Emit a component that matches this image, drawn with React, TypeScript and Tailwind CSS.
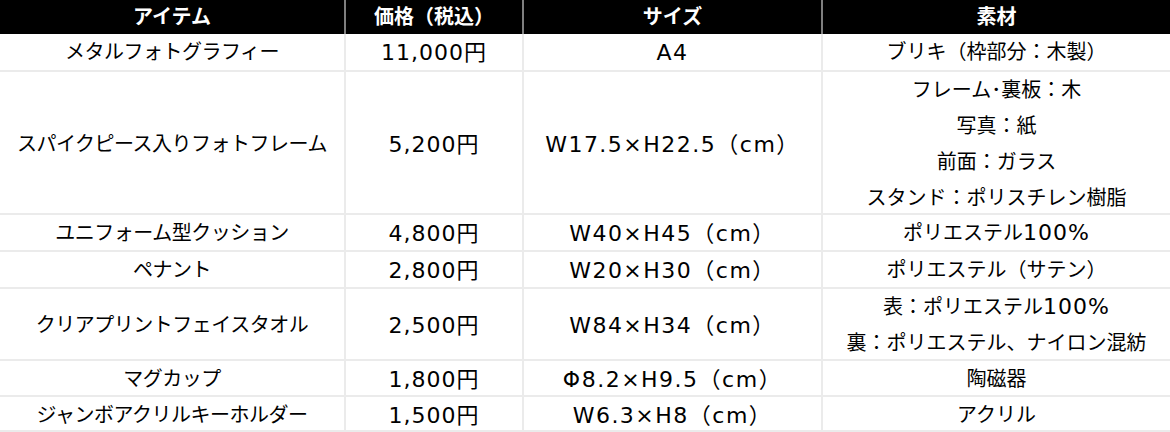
import React from "react";

const font = {
  fontFamily: '"DejaVu Sans", "Noto Sans CJK JP", sans-serif',
};

type Row = {
  item: string;
  price: string;
  size: string;
  material: string[];
  h: string;
};

const rows: Row[] = [
  { item: "メタルフォトグラフィー", price: "11,000円", size: "A4", material: ["ブリキ（枠部分：木製）"], h: "h-[38px]" },
  {
    item: "スパイクピース入りフォトフレーム",
    price: "5,200円",
    size: "W17.5×H22.5（cm）",
    material: ["フレーム･裏板：木", "写真：紙", "前面：ガラス", "スタンド：ポリスチレン樹脂"],
    h: "h-[143px]",
  },
  { item: "ユニフォーム型クッション", price: "4,800円", size: "W40×H45（cm）", material: ["ポリエステル100%"], h: "h-[37px]" },
  { item: "ペナント", price: "2,800円", size: "W20×H30（cm）", material: ["ポリエステル（サテン）"], h: "h-[37px]" },
  {
    item: "クリアプリントフェイスタオル",
    price: "2,500円",
    size: "W84×H34（cm）",
    material: ["表：ポリエステル100%", "裏：ポリエステル、ナイロン混紡"],
    h: "h-[72px]",
  },
  { item: "マグカップ", price: "1,800円", size: "Φ8.2×H9.5（cm）", material: ["陶磁器"], h: "h-[36px]" },
  { item: "ジャンボアクリルキーホルダー", price: "1,500円", size: "W6.3×H8（cm）", material: ["アクリル"], h: "h-[35px]" },
];

const cols = "grid grid-cols-[346px_178px_299px_347px]";

// latin runs are set a bit larger so they read like the original's wide digits
function Mixed({ text }: { text: string }) {
  const parts = text.split(/([0-9%]+)/);
  return (
    <>
      {parts.map((p, i) =>
        /^[0-9%]+$/.test(p) ? (
          <span key={i} className="text-[22px] tracking-[1px]">{p}</span>
        ) : (
          <span key={i}>{p}</span>
        )
      )}
    </>
  );
}

export default function App() {
  return (
    <div className="w-[1170px] h-[432px] overflow-hidden bg-white text-black" style={font}>
      <div className={`${cols} h-[34px] bg-black text-white font-bold text-[20px]`}>
        <div className="flex items-center justify-center border-r-2 border-[#7f7f7f]">アイテム</div>
        <div className="flex items-center justify-center border-r-2 border-[#7f7f7f]">価格（税込）</div>
        <div className="flex items-center justify-center border-r-2 border-[#7f7f7f]">サイズ</div>
        <div className="flex items-center justify-center">素材</div>
      </div>
      {rows.map((r) => (
        <div key={r.item} className={`${cols} ${r.h} border-b-2 border-[#ebebeb] text-[20px]`}>
          <div className="flex items-center justify-center border-r-2 border-[#ebebeb] tracking-[-0.5px]">{r.item}</div>
          <div className="flex items-center justify-center border-r-2 border-[#ebebeb] text-[22px] tracking-[1px]">{r.price}</div>
          <div className="flex items-center justify-center border-r-2 border-[#ebebeb] text-[22px] tracking-[1.5px]">{r.size}</div>
          <div className="flex flex-col items-center justify-center leading-[36px]">
            {r.material.map((m) => (
              <div key={m}>
                <Mixed text={m} />
              </div>
            ))}
          </div>
        </div>
      ))}
    </div>
  );
}
